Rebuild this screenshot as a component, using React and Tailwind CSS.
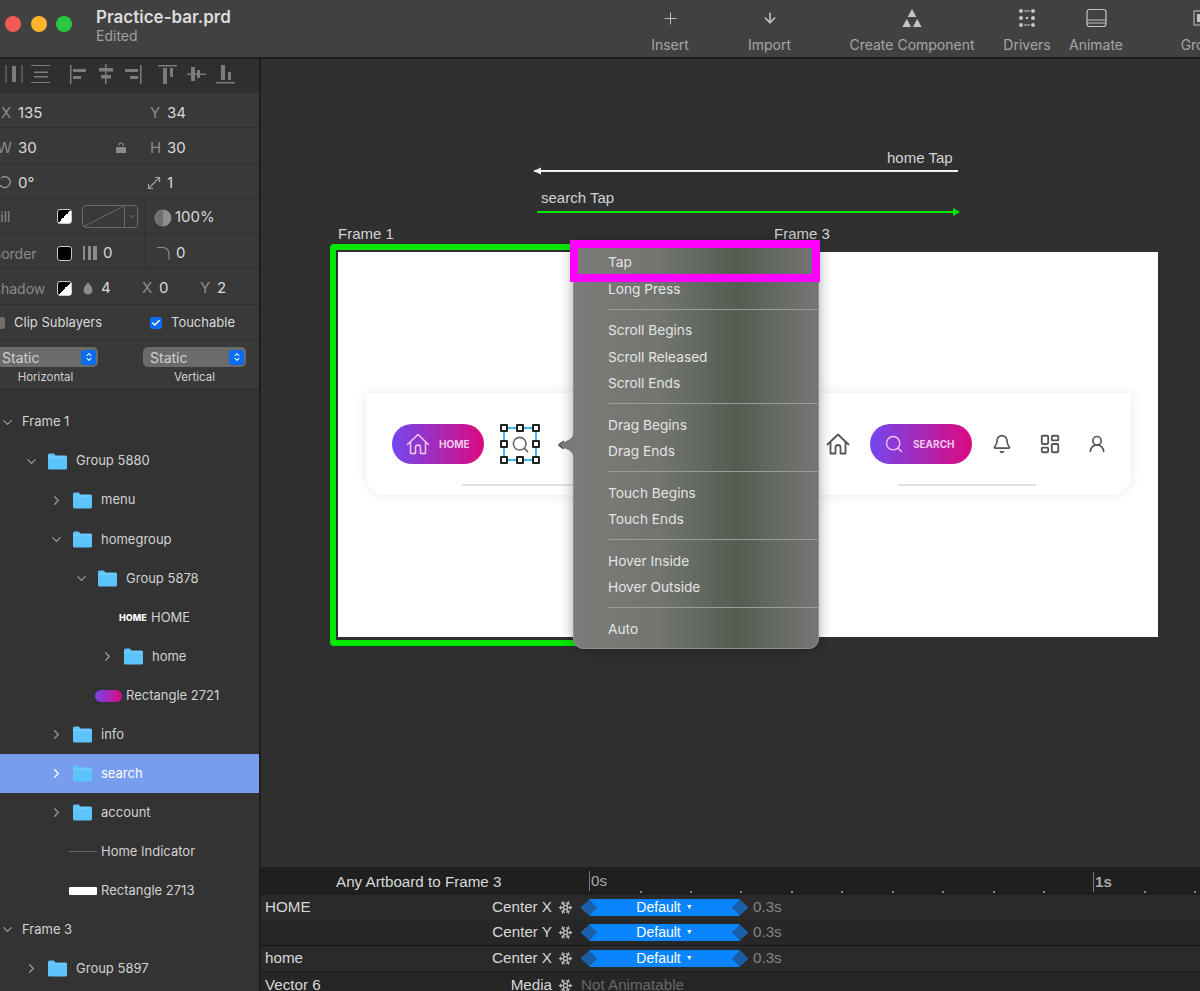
import { Search, Bell, LayoutDashboard, UserRound, ChevronRight, ChevronDown, Snowflake, Plus, ArrowDown, ChevronsUpDown, Check } from 'lucide-react';

const sans = 'font-["Inter","Liberation_Sans",sans-serif]';
const helv = 'font-["Liberation_Sans",Arial,sans-serif]';

function HomeIcon({ size, stroke }) {
    return (
        <svg width={size} height={size} viewBox="0 0 24 24" fill="none" stroke="currentColor" strokeWidth={stroke} strokeLinecap="round" strokeLinejoin="round" className="shrink-0">
            <path d="M1.500 12.500L12 2.500l10.500 10" />
            <path d="M4.500 10.500V21.500h5v-6a2.500 2.500 0 0 1 5 0v6h5V10.500" />
        </svg>
    );
}

function Tool({ width, label, children }) {
    return (
        <div className={`${width} shrink-0 flex flex-col items-center text-[14px] text-[#a6a6a6]`}>
            <div className="h-[22px] flex items-center justify-center text-[#c4c4c4]">{children}</div>
            <span className="mt-[7px] leading-[17px] whitespace-nowrap">{label}</span>
        </div>
    );
}

function Header() {
    return (
        <header className={`${sans} h-[59px] shrink-0 flex items-start bg-[#414141] border-b-2 border-[#1e1e1e] overflow-hidden`}>
            <div className="w-[620px] shrink-0 flex items-start">
                <div className="flex gap-[9.5px] pl-[5px] pt-[16px]">
                    <span className="w-[16px] h-[16px] rounded-full bg-[#f25a55]" />
                    <span className="w-[16px] h-[16px] rounded-full bg-[#fdb42d]" />
                    <span className="w-[16px] h-[16px] rounded-full bg-[#27c73f]" />
                </div>
                <div className="ml-[24px] pt-[7px]">
                    <div className="text-[17px] leading-[20px] font-semibold text-[#dcdcdc]">Practice-bar.prd</div>
                    <div className="text-[14px] leading-[17px] text-[#a0a0a0]">Edited</div>
                </div>
            </div>
            <div className="flex pt-[7px]">
                <Tool width="w-[100px]" label="Insert"><Plus size={19} strokeWidth={1.2} /></Tool>
                <Tool width="w-[99px]" label="Import"><ArrowDown size={16} strokeWidth={2.4} /></Tool>
                <Tool width="w-[186px]" label="Create Component">
                    <svg width="22" height="20" viewBox="0 0 22 20" fill="#c4c4c4">
                        <path d="M11 1l4.4 8H6.600zM5.800 11l4.300 8H1.400zM16.200 11l4.400 8h-8.700z" />
                    </svg>
                </Tool>
                <Tool width="w-[44px]" label="Drivers">
                    <svg width="18" height="20" viewBox="0 0 18 20" fill="#c4c4c4">
                        <circle cx="3" cy="3" r="2" /><circle cx="15" cy="3" r="2" />
                        <circle cx="3" cy="10" r="2" /><circle cx="9" cy="10" r="1.300" /><circle cx="15" cy="10" r="2" />
                        <circle cx="3" cy="17" r="2" /><circle cx="15" cy="17" r="2" />
                        <rect x="6" y="2.500" width="6" height="1" /><rect x="6" y="16.500" width="6" height="1" />
                    </svg>
                </Tool>
                <Tool width="w-[94px]" label="Animate">
                    <svg width="21" height="20" viewBox="0 0 21 20" fill="none" stroke="#c4c4c4" strokeWidth="1.200">
                        <rect x="1" y="1.500" width="19" height="17" rx="2.500" />
                        <path d="M1 12h19M1 15h19" />
                    </svg>
                </Tool>
                <Tool width="w-[116px]" label="Group">
                    <svg width="20" height="20" viewBox="0 0 20 20" fill="#c4c4c4">
                        <rect x="3" y="3" width="14" height="14" fill="none" stroke="#c4c4c4" />
                        <rect x="6" y="6" width="8" height="8" />
                    </svg>
                </Tool>
            </div>
        </header>
    );
}

function AlignIcons() {
    return (
        <svg width="240" height="34" viewBox="0 0 240 34" fill="#7c7c7c" className="block">
            <path d="M5.500 6h1v18h-1zM21.500 6h1v18h-1zM12 7h4v16h-4z" />
            <path d="M31 6h19v1H31zM31 23h19v1H31zM34 12.500h14v1.500H34zM34 17h14v1.500H34z" />
            <path d="M70 6h1.500v19H70zM73 10h13v3H73zM73 17h8v3h-8z" />
            <path d="M105 5h1.500v20H105zM99 9h14v3.500H99zM101 16h10v3.500h-10z" />
            <path d="M140 6h1.500v19H140zM125 10h13v3h-13zM130 17h8v3h-8z" />
            <path d="M158 6h19v1.500h-19zM163 9h4v16h-4zM170 9h3v9h-3z" />
            <path d="M187 14.500h19v1.500h-19zM191 8h4v14h-4zM197 11h3v8h-3z" />
            <path d="M216 23h19v1.500h-19zM221 6h4v15h-4zM228 13h3v8h-3z" />
        </svg>
    );
}

function Swatch({ black }) {
    return (
        <span className={`block w-[15px] h-[15px] rounded-[3px] border border-[#c9c9c9] shrink-0 ${black ? 'bg-black' : 'bg-[linear-gradient(135deg,#000_50%,#fff_50%)]'}`} />
    );
}

function Row({ children, className = 'items-center text-[15px] pt-[5px]' }) {
    return (
        <div className={`h-[35.3px] flex border-b border-[#2f2f2f] text-[#dadada] ${className}`}>
            {children}
        </div>
    );
}

function Properties() {
    return (
        <div className="shrink-0">
            <div className="h-[34px] bg-[#2f2f2f] flex items-center"><AlignIcons /></div>
            <div className="bg-[#393939]">
                <Row className="items-center text-[15px] pt-[7px]">
                    <span className="w-[18px] pl-[1px] text-[#8b8b8b]">X</span>
                    <span className="w-[132px]">135</span>
                    <span className="w-[17px] text-[#8b8b8b]">Y</span>
                    <span>34</span>
                </Row>
                <Row>
                    <span className="w-[18px] -ml-[3px] text-[#8b8b8b]">W</span>
                    <span className="w-[97px] ml-[3px]">30</span>
                    <svg width="12" height="13" viewBox="0 0 12 13" fill="#8b8b8b" className="shrink-0">
                        <path d="M2 6h8a1 1 0 0 1 1 1v5H1V7a1 1 0 0 1 1-1zM3.200 4.200a2.800 2.800 0 0 1 5.600 0V5H7.600v-.8a1.600 1.600 0 0 0-3.200 0z" />
                    </svg>
                    <span className="w-[18px] ml-[23px] text-[#8b8b8b]">H</span>
                    <span className="-ml-[1px]">30</span>
                </Row>
                <Row>
                    <svg width="14" height="16" viewBox="0 0 14 16" fill="none" stroke="#a0a0a0" strokeWidth="1.200" className="-ml-[2px] shrink-0">
                        <path d="M3 3a5.500 5.500 0 1 1-1 7M1 14.500V9.800l3.800 2.400" />
                    </svg>
                    <span className="w-[129px] ml-[6px]">0°</span>
                    <svg width="14" height="14" viewBox="0 0 14 14" fill="none" stroke="#a0a0a0" strokeWidth="1.200" className="shrink-0">
                        <path d="M2 12L12 2M8 1.500h4.500V6M1.500 8v4.500H6" />
                    </svg>
                    <span className="ml-[6px]">1</span>
                </Row>
                <Row className="items-stretch text-[15px]">
                    <div className="w-[145px] flex items-center pt-[1px] border-r border-[#2f2f2f] shrink-0">
                        <span className="w-[65px] -ml-[8px] text-[14px] text-[#8b8b8b] shrink-0">Fill</span>
                        <Swatch />
                        <div className="ml-[10px] w-[56px] h-[23px] rounded-[4px] border border-[#6a6a6a] flex items-center shrink-0">
                            <svg width="41" height="21" viewBox="0 0 41 21" className="shrink-0"><path d="M0 21L41 0" stroke="#6a6a6a" fill="none" /></svg>
                            <div className="h-full flex-1 border-l border-[#6a6a6a] flex items-center justify-center"><ChevronDown size={9} color="#8b8b8b" /></div>
                        </div>
                    </div>
                    <div className="flex items-center pt-[3px] pl-[9px]">
                        <svg width="18" height="18" viewBox="0 0 18 18" className="shrink-0">
                            <circle cx="9" cy="9" r="8" fill="#6e6e6e" stroke="#8a8a8a" />
                            <path d="M9 1a8 8 0 0 1 0 16z" fill="#8e8e8e" />
                        </svg>
                        <span className="ml-[3px]">100%</span>
                    </div>
                </Row>
                <Row className="items-stretch text-[15px]">
                    <div className="w-[145px] flex items-center pt-[4px] border-r border-[#2f2f2f] shrink-0">
                        <span className="w-[65px] -ml-[8px] text-[14px] text-[#8b8b8b] shrink-0">Border</span>
                        <Swatch black />
                        <svg width="14" height="14" viewBox="0 0 14 14" fill="#8b8b8b" className="ml-[11px] shrink-0">
                            <rect x="0" y="0" width="2" height="14" /><rect x="5" y="0" width="3" height="14" /><rect x="10" y="0" width="4" height="14" />
                        </svg>
                        <span className="ml-[6px]">0</span>
                    </div>
                    <div className="flex items-center pt-[4px] pl-[11px]">
                        <svg width="14" height="14" viewBox="0 0 14 14" fill="none" stroke="#8b8b8b" strokeWidth="1.200" className="shrink-0">
                            <path d="M1 1.500h6a6 6 0 0 1 6 6v6" />
                        </svg>
                        <span className="ml-[6px]">0</span>
                    </div>
                </Row>
                <Row className="items-center text-[15px] pt-[4px]">
                    <span className="w-[65px] -ml-[8px] text-[14px] text-[#8b8b8b] shrink-0">Shadow</span>
                    <Swatch />
                    <svg width="10" height="13" viewBox="0 0 10 13" fill="#8b8b8b" className="ml-[11px] shrink-0">
                        <path d="M5 0c1.500 2.600 4.500 5 4.500 8a4.500 4.500 0 0 1-9 0C.5 5 3.500 2.600 5 0z" />
                    </svg>
                    <span className="w-[41px] ml-[8px]">4</span>
                    <span className="w-[17px] text-[#8b8b8b]">X</span>
                    <span className="w-[41px]">0</span>
                    <span className="w-[17px] text-[#8b8b8b]">Y</span>
                    <span>2</span>
                </Row>
                <Row className="items-center text-[13px] pt-[2px]">
                    <span className="w-[12px] h-[12px] -ml-[7px] rounded-[2px] bg-[#6f6f6f] shrink-0" />
                    <span className="w-[136px] ml-[9px]">Clip Sublayers</span>
                    <span className="w-[12px] h-[12px] rounded-[2px] bg-[#0a6cf0] flex items-center justify-center shrink-0">
                        <Check size={10} strokeWidth={3.5} color="#fff" />
                    </span>
                    <span className="ml-[9px]">Touchable</span>
                </Row>
                <div className="h-[48px] pt-[7px] flex text-[#d0d0d0]">
                    <div className="w-[143px] shrink-0">
                        <div className="w-[98px] h-[20px] rounded-r-[5px] bg-[#6b6b6b] flex items-center justify-between pl-[2px] pr-[2px] text-[14px]">
                            Static
                            <span className="w-[15px] h-[15px] rounded-[3px] bg-[#0a6cf0] flex items-center justify-center"><ChevronsUpDown size={10} color="#fff" strokeWidth={2.500} /></span>
                        </div>
                        <div className="mt-[2px] w-[91px] text-center text-[11.500px] leading-[16px]">Horizontal</div>
                    </div>
                    <div className="w-[103px] shrink-0">
                        <div className="h-[20px] rounded-[5px] bg-[#6b6b6b] flex items-center justify-between pl-[7px] pr-[2px] text-[14px]">
                            Static
                            <span className="w-[15px] h-[15px] rounded-[3px] bg-[#0a6cf0] flex items-center justify-center"><ChevronsUpDown size={10} color="#fff" strokeWidth={2.500} /></span>
                        </div>
                        <div className="mt-[2px] text-center text-[11.500px] leading-[16px]">Vertical</div>
                    </div>
                </div>
            </div>
        </div>
    );
}

function Folder() {
    return (
        <svg width="19" height="17" viewBox="0 0 19 17" className="shrink-0">
            <path d="M0 2a1.500 1.500 0 0 1 1.500-1.500h4.200L7.500 2.500H17.500A1.500 1.500 0 0 1 19 4v11a1.500 1.500 0 0 1-1.500 1.500h-16A1.500 1.500 0 0 1 0 15z" fill="#5cc4fb" />
            <path d="M0 4h19" stroke="#8fd6fc" strokeWidth="0.700" />
        </svg>
    );
}

const layers = [
    { name: 'Frame 1', pad: 'pl-0', chevron: 'down', plain: true },
    { name: 'Group 5880', pad: 'pl-[24px]', chevron: 'down', folder: true },
    { name: 'menu', pad: 'pl-[49px]', chevron: 'right', folder: true },
    { name: 'homegroup', pad: 'pl-[49px]', chevron: 'down', folder: true },
    { name: 'Group 5878', pad: 'pl-[74px]', chevron: 'down', folder: true },
    { name: 'HOME', pad: 'pl-[119px]', thumb: 'home' },
    { name: 'home', pad: 'pl-[100px]', chevron: 'right', folder: true },
    { name: 'Rectangle 2721', pad: 'pl-[95px]', thumb: 'gradient' },
    { name: 'info', pad: 'pl-[49px]', chevron: 'right', folder: true },
    { name: 'search', pad: 'pl-[49px]', chevron: 'right', folder: true, selected: true },
    { name: 'account', pad: 'pl-[49px]', chevron: 'right', folder: true },
    { name: 'Home Indicator', pad: 'pl-[69px]', thumb: 'line' },
    { name: 'Rectangle 2713', pad: 'pl-[69px]', thumb: 'white' },
    { name: 'Frame 3', pad: 'pl-0', chevron: 'down', plain: true },
    { name: 'Group 5897', pad: 'pl-[24px]', chevron: 'right', folder: true },
];

function LayerRow({ layer }) {
    const Chevron = layer.chevron === 'down' ? ChevronDown : ChevronRight;
    return (
        <div className={`h-[39.07px] flex items-center text-[13px] ${layer.pad} ${layer.selected ? 'bg-[#789cee] text-white' : 'text-[#d2d2d2]'}`}>
            {layer.chevron && (
                <span className={`${layer.plain ? 'w-[22px]' : 'w-[24px]'} shrink-0 ${layer.selected ? 'text-white' : 'text-[#9a9a9a]'}`}>
                    <Chevron size={15} strokeWidth={2} />
                </span>
            )}
            {layer.folder && <Folder />}
            {layer.thumb === 'home' && <span className="w-[32px] shrink-0 text-[9px] font-extrabold text-white">HOME</span>}
            {layer.thumb === 'gradient' && <span className="w-[27px] h-[12px] mr-[4px] rounded-full shrink-0 bg-[linear-gradient(90deg,#7347ee,#dc0a80)]" />}
            {layer.thumb === 'line' && <span className="w-[28px] h-px mr-[4px] shrink-0 bg-[#666]" />}
            {layer.thumb === 'white' && <span className="w-[28px] h-[8px] mr-[4px] shrink-0 rounded-[1px] bg-white" />}
            <span className={`whitespace-nowrap ${layer.folder ? 'ml-[9px]' : ''}`}>{layer.name}</span>
        </div>
    );
}

function Sidebar() {
    return (
        <aside className={`${sans} w-[261px] shrink-0 flex flex-col bg-[#333333] border-r-2 border-[#1e1e1e] overflow-hidden`}>
            <Properties />
            <div className="pt-[14.500px]">
                {layers.map((layer) => <LayerRow key={layer.name} layer={layer} />)}
            </div>
        </aside>
    );
}

function NavCard() {
    const pill = 'h-[40px] rounded-full bg-[linear-gradient(90deg,#7347ee,#dc0a80)] flex items-center text-[#f0c9ec] font-bold shrink-0';
    const handle = 'absolute w-[8px] h-[8px] bg-white border-2 border-[#222] rounded-[1px]';
    return (
        <div className="ml-[28px] mt-[141px] w-[765px] h-[102px] flex rounded-b-[20px] bg-white shadow-[0_0_12px_rgba(0,0,0,0.09)]">
            <div className="w-[384px] shrink-0 pt-[31px]">
                <div className="flex items-center h-[40px] pl-[26px]">
                    <div className={`${pill} w-[92px] pl-[14px] gap-[9px] text-[10px] ${sans}`}>
                        <HomeIcon size={24} stroke={1.500} />
                        HOME
                    </div>
                    <div className="relative ml-[19px] w-[34px] h-[34px] border-2 border-[#43b4f4] flex items-center justify-center text-[#666]">
                        <Search size={19} strokeWidth={2} />
                        <span className={`${handle} -left-[5px] -top-[5px]`} />
                        <span className={`${handle} left-[11px] -top-[5px]`} />
                        <span className={`${handle} -right-[5px] -top-[5px]`} />
                        <span className={`${handle} -left-[5px] top-[11px]`} />
                        <span className={`${handle} -right-[5px] top-[11px]`} />
                        <span className={`${handle} -left-[5px] -bottom-[5px]`} />
                        <span className={`${handle} left-[11px] -bottom-[5px]`} />
                        <span className={`${handle} -right-[5px] -bottom-[5px]`} />
                    </div>
                </div>
                <div className="ml-[96px] mt-[20px] w-[138px] h-[2px] bg-[#e2e2e2]" />
            </div>
            <div className="flex-1 pt-[31px]">
                <div className="flex items-center h-[40px] text-[#555]">
                    <span className="ml-[76px]"><HomeIcon size={24} stroke={1.800} /></span>
                    <div className={`${pill} ml-[20px] w-[102px] pl-[14px] gap-[9px] text-[10px] ${sans}`}>
                        <Search size={20} strokeWidth={1.700} />
                        SEARCH
                    </div>
                    <span className="ml-[20px]"><Bell size={20} strokeWidth={2} /></span>
                    <span className="ml-[27px]"><LayoutDashboard size={22} strokeWidth={2} /></span>
                    <span className="ml-[26px]"><UserRound size={20} strokeWidth={2} /></span>
                </div>
                <div className="ml-[148px] mt-[20px] w-[138px] h-[2px] bg-[#e2e2e2]" />
            </div>
        </div>
    );
}

const menuGroups = [
    ['Tap', 'Long Press'],
    ['Scroll Begins', 'Scroll Released', 'Scroll Ends'],
    ['Drag Begins', 'Drag Ends'],
    ['Touch Begins', 'Touch Ends'],
    ['Hover Inside', 'Hover Outside'],
    ['Auto'],
];

function TriggerMenu() {
    return (
        <div className={`${sans} absolute left-[312px] top-[183px] w-[246px] h-[407px] rounded-[10px] border border-[#8f8f8f] shadow-[0_0_14px_rgba(0,0,0,0.35)] pt-[6.500px] text-[13.700px] text-[#e4e4e4] bg-[linear-gradient(90deg,#7b7c79_0%,#72756f_35%,#5c645a_58%,#525d50_67%,#60655e_78%,#757674_100%)]`}>
            {menuGroups.map((group, i) => (
                <div key={group[0]}>
                    {i > 0 && <div className="ml-[34px] mt-[6px] mb-[8px] h-px bg-[#9a9c98]" />}
                    {group.map((item) => (
                        <div key={item} className="h-[26.500px] pl-[34px] flex items-center">{item}</div>
                    ))}
                </div>
            ))}
            <svg width="16" height="30" viewBox="0 0 16 30" className="absolute -left-[16px] top-[187px]">
                <path d="M16 0C16 8 12 10 3 13Q0 15 3 17C12 20 16 22 16 30z" fill="#777976" />
                <path d="M6 11L1.500 14Q0 15 1.500 16L6 19" fill="none" stroke="#444" strokeWidth="1.200" />
            </svg>
            <div className="absolute -left-[4px] -top-[3px] w-[250px] h-[42px] border-[8px] border-[#ff00ff]" />
        </div>
    );
}

function Canvas() {
    return (
        <div className={`${helv} relative flex-1 bg-[#303030] overflow-hidden text-[15px] text-[#d4d4d4]`}>
            <span className="absolute left-[626px] top-[88px]">home Tap</span>
            <svg width="430" height="10" viewBox="0 0 430 10" className="absolute left-[272px] top-[107px]">
                <path d="M1 5h424" stroke="#f0f0f0" strokeWidth="2" />
                <path d="M0.500 5L8 1.500v7z" fill="#f0f0f0" />
            </svg>
            <span className="absolute left-[280px] top-[128px]">search Tap</span>
            <svg width="430" height="10" viewBox="0 0 430 10" className="absolute left-[275px] top-[148px]">
                <path d="M1 5h420" stroke="#00e800" strokeWidth="2" />
                <path d="M424 5L417 1v8z" fill="#00e800" />
            </svg>
            <span className="absolute left-[77px] top-[164px]">Frame 1</span>
            <span className="absolute left-[513px] top-[164px]">Frame 3</span>

            <div className="absolute left-[69px] top-[185px] w-[300px] h-[402px] rounded-[4px] border-[6px] border-[#00e800]" />
            <div className="absolute left-[77px] top-[193px] w-[820px] h-[385px] bg-white overflow-hidden">
                <NavCard />
            </div>
            <TriggerMenu />
        </div>
    );
}

const ticks = ['left-[640px]', 'left-[690px]', 'left-[740px]', 'left-[791px]', 'left-[841px]', 'left-[892px]', 'left-[942px]', 'left-[993px]', 'left-[1043px]', 'left-[1144px]', 'left-[1194px]'];

function Curve() {
    return (
        <div className="relative w-[167px] h-[17px] ml-[3px] shrink-0 bg-[#0a84ff] text-white text-[14px] flex items-center justify-center gap-[5px] [clip-path:polygon(9px_0,158px_0,167px_50%,158px_100%,9px_100%,0_50%)]">
            <span>Default</span>
            <span className="text-[7px]">▼</span>
            <span className="absolute left-[3px] top-[3px] w-[11px] h-[11px] rotate-45 bg-[#1a5ea6]" />
            <span className="absolute right-[3px] top-[3px] w-[11px] h-[11px] rotate-45 bg-[#1a5ea6]" />
        </div>
    );
}

const tracks = [
    { name: 'HOME', prop: 'Center X', bg: 'h-[25px] bg-[#2a2a2a]' },
    { name: '', prop: 'Center Y', bg: 'h-[26px] bg-[#272727] border-b border-[#171717]' },
    { name: 'home', prop: 'Center X', bg: 'h-[26px] bg-[#2a2a2a] border-b border-[#1a1a1a]' },
    { name: 'Vector 6', prop: 'Media', bg: 'h-[26px] bg-[#262626]', locked: true },
];

function Timeline() {
    return (
        <div className={`${helv} h-[124px] shrink-0 text-[15.200px] text-[#d8d8d8] overflow-hidden`}>
            <div className="relative h-[28px] flex items-center bg-[#1f1f1f]">
                <span className="w-[317px] pl-[75px] pt-[2px] shrink-0 whitespace-nowrap">Any Artboard to Frame 3</span>
                <span className="ml-[11px] h-[20px] border-l border-[#777] pl-[1px] leading-[20px] text-[#a8a8a8]">0s</span>
                <span className="absolute left-[832px] top-[5px] h-[20px] border-l border-[#777] pl-[1px] leading-[20px] font-bold text-[#a8a8a8]">1s</span>
                {ticks.map((t) => (
                    <span key={t} className={`absolute ${t} -ml-[261px] top-[24px] w-[2px] h-[2px] bg-[#8a8a8a]`} />
                ))}
            </div>
            {tracks.map((track, i) => (
                <div key={i} className={`flex items-center ${track.bg}`}>
                    <span className="w-[231px] pl-[4px] shrink-0">{track.name}</span>
                    <span className="w-[60px] text-right shrink-0 whitespace-nowrap">{track.prop}</span>
                    <span className="ml-[6px] w-[20px] shrink-0 text-[#bcbcbc]"><Snowflake size={15} strokeWidth={2} /></span>
                    {track.locked
                        ? <span className="ml-[3px] text-[#686868]">Not Animatable</span>
                        : (
                            <>
                                <Curve />
                                <span className="ml-[5px] text-[#858585]">0.3s</span>
                            </>
                        )}
                </div>
            ))}
        </div>
    );
}

export default function App() {
    return (
        <div className="w-[1200px] h-[991px] flex flex-col overflow-hidden bg-[#303030]">
            <Header />
            <div className="flex-1 flex min-h-0">
                <Sidebar />
                <main className="flex-1 flex flex-col min-w-0">
                    <Canvas />
                    <Timeline />
                </main>
            </div>
        </div>
    );
}
